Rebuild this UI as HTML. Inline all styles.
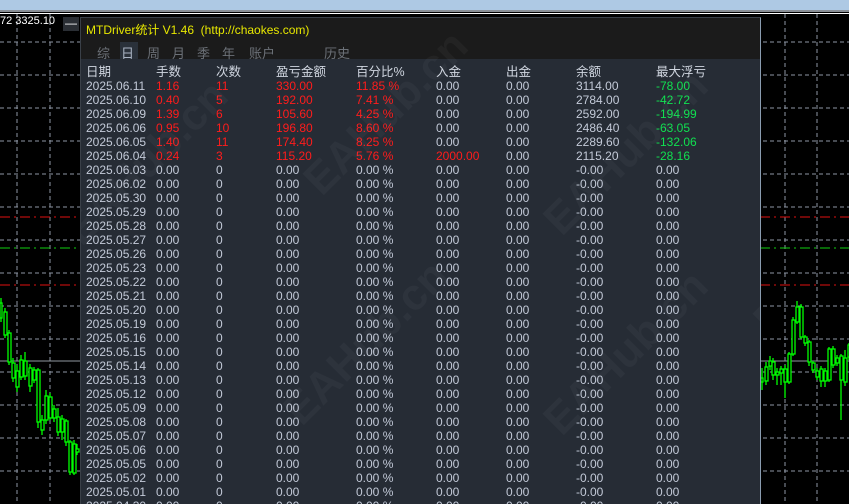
<!DOCTYPE html>
<html><head><meta charset="utf-8"><style>
*{margin:0;padding:0;box-sizing:border-box}
body{width:849px;height:504px;overflow:hidden;background:#000;position:relative;font-family:"Liberation Sans","Noto Sans CJK SC",sans-serif;font-size:12px}
#bg{position:absolute;left:0;top:0}
.panel{position:absolute;left:80px;top:17px;width:681px;height:487px;background:#262c35;border-left:1px solid #3a4048;border-right:1px solid #8a9cb0;border-top:1px solid #3a4048;overflow:hidden}
.head{position:absolute;left:0;top:0;width:100%;height:41px;background:#1b1b1b}
.title{position:absolute;left:5px;top:3px;color:#e8e800;font-size:12px}
.tab{position:absolute;top:25px;color:#6c7178;font-size:13px}
.tabsel{position:absolute;left:39px;top:24px;width:18px;height:17px;background:#2a313a}
.r{position:absolute;left:0;height:14px;line-height:14px;width:100%;color:#c3cad8;white-space:nowrap}
.r span{position:absolute;top:0}
.c1{left:5px}.c2{left:75px}.c3{left:135px}.c4{left:195px}.c5{left:275px}.c6{left:355px}.c7{left:425px}.c8{left:495px}.c9{left:575px}
.red{color:#ff1c1c}.grn{color:#10e050}
.hd{color:#d0d6e0;font-size:12.5px}
.wm{position:absolute;color:rgba(255,255,255,0.035);font-size:44px;font-weight:bold;transform:rotate(-45deg);white-space:nowrap}
.minus{position:absolute;left:63px;top:17px;width:16px;height:14px;background:#2a2e34;color:#fff;font-size:12px;line-height:12px;text-align:center}
</style></head><body>
<svg id="bg" width="849" height="504">
<rect x="0" y="0" width="849" height="10" fill="#aec9e4"/>
<rect x="0" y="10" width="849" height="2" fill="#8a8f96"/>
<line x1="0" y1="13.5" x2="849" y2="13.5" stroke="#fff"/>
<g stroke="#8e96a4" stroke-dasharray="4,3">
<line x1="17" y1="14" x2="17" y2="504"/><line x1="50" y1="14" x2="50" y2="504"/>
<line x1="785" y1="14" x2="785" y2="504"/><line x1="817" y1="14" x2="817" y2="504"/>
<line x1="0" y1="42" x2="849" y2="42"/><line x1="0" y1="75" x2="849" y2="75"/><line x1="0" y1="108" x2="849" y2="108"/><line x1="0" y1="141" x2="849" y2="141"/><line x1="0" y1="174" x2="849" y2="174"/><line x1="0" y1="207" x2="849" y2="207"/><line x1="0" y1="240" x2="849" y2="240"/><line x1="0" y1="273" x2="849" y2="273"/><line x1="0" y1="306" x2="849" y2="306"/><line x1="0" y1="339" x2="849" y2="339"/><line x1="0" y1="372" x2="849" y2="372"/><line x1="0" y1="405" x2="849" y2="405"/><line x1="0" y1="438" x2="849" y2="438"/><line x1="0" y1="471" x2="849" y2="471"/>
</g>
<g stroke-dasharray="10,4,2,4">
<line x1="0" y1="217" x2="849" y2="217" stroke="#e01010"/>
<line x1="0" y1="248" x2="849" y2="248" stroke="#10d010"/>
<line x1="0" y1="285" x2="849" y2="285" stroke="#e01010"/>
</g>
<line x1="0" y1="361" x2="849" y2="361" stroke="#9098a0"/>
<g stroke="#00ff00" fill="#000" stroke-width="1.3">
<line x1="1" y1="298" x2="1" y2="322"/><rect x="0" y="303" width="2" height="15"/>
<line x1="5" y1="308" x2="5" y2="338"/><rect x="4" y="312" width="3" height="23"/>
<line x1="9" y1="330" x2="9" y2="365"/><rect x="8" y="333" width="3" height="29"/>
<line x1="13" y1="358" x2="13" y2="382"/><rect x="12" y="363" width="3" height="15"/>
<line x1="17" y1="365" x2="17" y2="392"/><rect x="16" y="371" width="3" height="16"/>
<line x1="21" y1="355" x2="21" y2="380"/><rect x="20" y="360" width="3" height="17"/>
<line x1="25" y1="352" x2="25" y2="380"/><rect x="24" y="361" width="3" height="15"/>
<line x1="30" y1="364" x2="30" y2="392"/><rect x="29" y="368" width="3" height="18"/>
<line x1="34" y1="367" x2="34" y2="383"/><rect x="33" y="370" width="3" height="10"/>
<line x1="38" y1="368" x2="38" y2="428"/><rect x="37" y="370" width="3" height="52"/>
<line x1="42" y1="415" x2="42" y2="435"/><rect x="41" y="420" width="3" height="10"/>
<line x1="46" y1="390" x2="46" y2="424"/><rect x="45" y="396" width="3" height="24"/>
<line x1="50" y1="393" x2="50" y2="420"/><rect x="49" y="397" width="3" height="21"/>
<line x1="54" y1="405" x2="54" y2="422"/><rect x="53" y="409" width="3" height="9"/>
<line x1="58" y1="408" x2="58" y2="436"/><rect x="57" y="417" width="3" height="15"/>
<line x1="62" y1="415" x2="62" y2="440"/><rect x="61" y="419" width="3" height="13"/>
<line x1="66" y1="419" x2="66" y2="446"/><rect x="65" y="421" width="3" height="21"/>
<line x1="70" y1="440" x2="70" y2="475"/><rect x="69" y="442" width="3" height="30"/>
<line x1="74" y1="440" x2="74" y2="475"/><rect x="73" y="444" width="3" height="29"/>
<line x1="77" y1="444" x2="77" y2="455"/><rect x="76" y="449" width="3" height="3"/>
<line x1="762" y1="368" x2="762" y2="390"/><rect x="761" y="378" width="2" height="4"/>
<line x1="766" y1="362" x2="766" y2="385"/><rect x="765" y="367" width="3" height="14"/>
<line x1="770" y1="356" x2="770" y2="370"/><rect x="769" y="361" width="3" height="5"/>
<line x1="773" y1="358" x2="773" y2="380"/><rect x="772" y="362" width="3" height="13"/>
<line x1="777" y1="368" x2="777" y2="385"/><rect x="776" y="372" width="3" height="3"/>
<line x1="781" y1="366" x2="781" y2="385"/><rect x="780" y="369" width="3" height="4"/>
<line x1="785" y1="365" x2="785" y2="398"/><rect x="784" y="369" width="3" height="13"/>
<line x1="789" y1="352" x2="789" y2="384"/><rect x="788" y="354" width="3" height="28"/>
<line x1="793" y1="317" x2="793" y2="356"/><rect x="792" y="320" width="3" height="34"/>
<line x1="797" y1="301" x2="797" y2="324"/><rect x="796" y="307" width="3" height="15"/>
<line x1="801" y1="304" x2="801" y2="339"/><rect x="800" y="307" width="3" height="30"/>
<line x1="805" y1="335" x2="805" y2="346"/><rect x="804" y="337" width="3" height="6"/>
<line x1="809" y1="340" x2="809" y2="366"/><rect x="808" y="342" width="3" height="20"/>
<line x1="813" y1="361" x2="813" y2="373"/><rect x="812" y="363" width="3" height="7"/>
<line x1="817" y1="368" x2="817" y2="380"/><rect x="816" y="371" width="3" height="6"/>
<line x1="821" y1="366" x2="821" y2="387"/><rect x="820" y="369" width="3" height="12"/>
<line x1="825" y1="368" x2="825" y2="387"/><rect x="824" y="371" width="3" height="10"/>
<line x1="829" y1="347" x2="829" y2="382"/><rect x="828" y="349" width="3" height="31"/>
<line x1="833" y1="346" x2="833" y2="368"/><rect x="832" y="349" width="3" height="16"/>
<line x1="837" y1="355" x2="837" y2="366"/><rect x="836" y="358" width="3" height="5"/>
<line x1="841" y1="354" x2="841" y2="420"/><rect x="840" y="356" width="3" height="24"/>
<line x1="845" y1="350" x2="845" y2="386"/><rect x="844" y="358" width="3" height="24"/>
<line x1="849" y1="343" x2="849" y2="360"/><rect x="848" y="345" width="3" height="12"/>
</g>
</svg>
<div style="position:absolute;left:0;top:15px;color:#fff;font-size:11px">72 3325.10</div>
<div class="minus">—</div>
<div class="panel">
<div class="head">
<div class="title">MTDriver统计 V1.46&nbsp; (http://chaokes.com)</div>
<div class="tabsel"></div>
<span class="tab" style="left:16px">综</span>
<span class="tab" style="left:40px;color:#aab4c4">日</span>
<span class="tab" style="left:66px">周</span>
<span class="tab" style="left:91px">月</span>
<span class="tab" style="left:116px">季</span>
<span class="tab" style="left:141px">年</span>
<span class="tab" style="left:168px">账户</span>
<span class="tab" style="left:243px">历史</span>
</div>
<div class="r hd" style="top:47px"><span class="c1">日期</span><span class="c2">手数</span><span class="c3">次数</span><span class="c4">盈亏金额</span><span class="c5">百分比%</span><span class="c6">入金</span><span class="c7">出金</span><span class="c8">余额</span><span class="c9">最大浮亏</span></div>
<div class="r" style="top:61px"><span class="c1">2025.06.11</span><span class="c2 red">1.16</span><span class="c3 red">11</span><span class="c4 red">330.00</span><span class="c5 red">11.85 %</span><span class="c6">0.00</span><span class="c7">0.00</span><span class="c8">3114.00</span><span class="c9 grn">-78.00</span></div>
<div class="r" style="top:75px"><span class="c1">2025.06.10</span><span class="c2 red">0.40</span><span class="c3 red">5</span><span class="c4 red">192.00</span><span class="c5 red">7.41 %</span><span class="c6">0.00</span><span class="c7">0.00</span><span class="c8">2784.00</span><span class="c9 grn">-42.72</span></div>
<div class="r" style="top:89px"><span class="c1">2025.06.09</span><span class="c2 red">1.39</span><span class="c3 red">6</span><span class="c4 red">105.60</span><span class="c5 red">4.25 %</span><span class="c6">0.00</span><span class="c7">0.00</span><span class="c8">2592.00</span><span class="c9 grn">-194.99</span></div>
<div class="r" style="top:103px"><span class="c1">2025.06.06</span><span class="c2 red">0.95</span><span class="c3 red">10</span><span class="c4 red">196.80</span><span class="c5 red">8.60 %</span><span class="c6">0.00</span><span class="c7">0.00</span><span class="c8">2486.40</span><span class="c9 grn">-63.05</span></div>
<div class="r" style="top:117px"><span class="c1">2025.06.05</span><span class="c2 red">1.40</span><span class="c3 red">11</span><span class="c4 red">174.40</span><span class="c5 red">8.25 %</span><span class="c6">0.00</span><span class="c7">0.00</span><span class="c8">2289.60</span><span class="c9 grn">-132.06</span></div>
<div class="r" style="top:131px"><span class="c1">2025.06.04</span><span class="c2 red">0.24</span><span class="c3 red">3</span><span class="c4 red">115.20</span><span class="c5 red">5.76 %</span><span class="c6 red">2000.00</span><span class="c7">0.00</span><span class="c8">2115.20</span><span class="c9 grn">-28.16</span></div>
<div id="rest"></div>
<div class="wm" style="left:-40px;top:120px">EAHub.cn</div>
<div class="wm" style="left:200px;top:70px">EAHub.cn</div>
<div class="wm" style="left:440px;top:110px">EAHub.cn</div>
<div class="wm" style="left:180px;top:300px">EAHub.cn</div>
<div class="wm" style="left:440px;top:310px">EAHub.cn</div>
<div class="wm" style="left:650px;top:210px">EAHub.cn</div>
<div class="wm" style="left:650px;top:410px">EAHub.cn</div>
</div>
<script>
var d=["06.03","06.02","05.30","05.29","05.28","05.27","05.26","05.23","05.22","05.21","05.20","05.19","05.16","05.15","05.14","05.13","05.12","05.09","05.08","05.07","05.06","05.05","05.02","05.01","04.30"];
var h="";for(var i=0;i<d.length;i++){h+='<div class="r" style="top:'+(145+14*i)+'px"><span class="c1">2025.'+d[i]+'</span><span class="c2">0.00</span><span class="c3">0</span><span class="c4">0.00</span><span class="c5">0.00 %</span><span class="c6">0.00</span><span class="c7">0.00</span><span class="c8">-0.00</span><span class="c9">0.00</span></div>';}
document.getElementById("rest").outerHTML=h;
</script>
</body></html>
